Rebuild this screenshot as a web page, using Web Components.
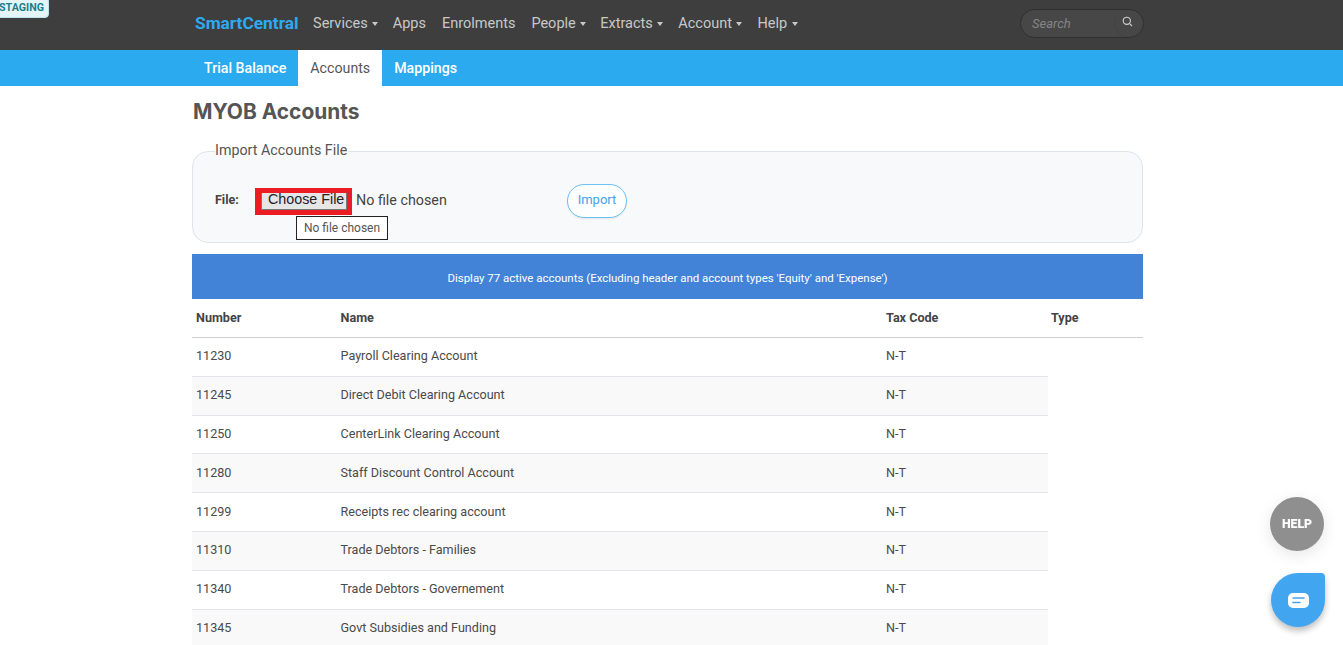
<!DOCTYPE html>
<html lang="en"><head><meta charset="utf-8"><title>MYOB Accounts</title>
<style>
html,body{margin:0;padding:0;height:645px;overflow:hidden;background:#fff;font-family:Roboto,"Liberation Sans",sans-serif;color:#4a4a4a}
</style></head><body>
<sc-badge>STAGING</sc-badge>
<sc-navbar></sc-navbar>
<sc-subnav></sc-subnav>
<sc-main>
  <sc-title>MYOB Accounts</sc-title>
  <sc-import></sc-import>
  <sc-accounts></sc-accounts>
</sc-main>
<sc-help></sc-help>
<sc-chat></sc-chat>
<script>
function def(name,html){customElements.define(name,class extends HTMLElement{constructor(){super();this.attachShadow({mode:'open'}).innerHTML=typeof html==='function'?html():html;}});}
const caret='<i></i>';
def('sc-badge',`<style>:host{position:absolute;left:-2px;top:-3px;z-index:5;display:block;height:21px;width:51px;box-sizing:border-box;background:#e4f5f9;border:1px solid #bfe3ea;border-radius:0 4px 4px 0;color:#17808f;font:700 10.7px/19px Roboto,sans-serif;text-align:left;overflow:hidden;white-space:nowrap}</style><slot></slot>`);
def('sc-navbar',()=>`<style>
:host{display:flex;align-items:center;height:50px;background:#3e3e3e;padding:0 199.5px 3px 195px;box-sizing:border-box;font:14.5px/20px Roboto,sans-serif;color:#c8c8c8}
b{color:#2daaf0;font:700 17.3px/20px Roboto,sans-serif;margin:-1px 14.5px 0 0}
a{margin-right:16px;display:flex;align-items:center;white-space:nowrap}
a.d{margin-right:15px}
a.m{margin-right:14px}
a i{display:block;margin-left:4.5px;margin-top:1px;border:3.5px solid transparent;border-top:4px solid #c8c8c8;border-bottom:0}
.s{margin-left:auto;width:123.5px;height:29px;box-sizing:border-box;border:1px solid #2f2f2f;border-radius:15px;background:#474747;display:flex;align-items:center;justify-content:space-between;padding:0 2px 0 11px;color:#858585;font:italic 13px Roboto,sans-serif}
.k{width:27px;height:27px;border-radius:50%;border:1px solid #444;border-width:0 0 1px 1px;box-sizing:border-box;display:flex;justify-content:center;padding-top:6px}
svg{display:block}
</style><b>SmartCentral</b><a class="m" style="margin-right:14.5px">Services${caret}</a><a>Apps</a><a>Enrolments</a><a class="m">People${caret}</a><a class="d">Extracts${caret}</a><a class="d">Account${caret}</a><a class="d">Help${caret}</a>
<div class="s"><span>Search</span><span class="k"><svg width="11" height="11" viewBox="0 0 11 11" fill="none" stroke="#d0d0d0" stroke-width="1.1"><circle cx="4.8" cy="4.8" r="3.6"/><path d="M7.4 7.4 10 10"/></svg></span></div>`);
def('sc-subnav',`<style>
:host{display:flex;height:36px;background:#2caaf0;padding-left:192px;font:500 14.2px/37px Roboto,sans-serif;color:#fff}
a{padding:0 12px;white-space:nowrap}
.on{background:#fff;color:#555;font-weight:400}
</style><a>Trial Balance</a><a class="on">Accounts</a><a>Mappings</a>`);
def('sc-main',`<style>:host{display:block;width:951px;margin-left:192px}</style><slot></slot>`);
def('sc-title',`<style>:host{display:block;height:65px;box-sizing:border-box;padding:13px 0 0 1px;font:700 20.9px/26px Inter,"Open Sans",sans-serif;color:#555}</style><slot></slot>`);
def('sc-import',`<style>
:host{display:block;position:relative;height:92px;box-sizing:border-box;background:#f8f9fb;border:1px solid #dfe4ea;border-radius:16px;margin-bottom:11px}
.l{position:absolute;left:22px;top:-10px;background:#fff;height:11px;line-height:16px;font-size:14.3px;color:#555;padding-right:1px;white-space:nowrap}
.r{display:flex;align-items:center;height:100%;padding:6px 0 0 22px;box-sizing:border-box}
.f{font:700 12.5px Roboto,sans-serif;color:#444;width:40px;margin-top:-2px}
.p{width:97px;height:27px;box-sizing:border-box;border:5px solid #ec1c24;border-left-width:6px;background:#ececec;display:flex;font:14.3px/11px "Liberation Sans",Arial,sans-serif;color:#222;margin-top:3px;overflow:hidden}
.p span{display:block;flex:1;box-sizing:border-box;border:1px solid #777;border-top:0;padding-left:6px;white-space:nowrap;height:17px;line-height:12px;background:#e6e6e6}
.n{font:14.3px Roboto,sans-serif;color:#444;margin-left:4px;width:211px}
.b{width:60px;height:34px;box-sizing:border-box;border:1px solid #6cc0f2;border-radius:17px;background:#fdfefe;color:#44a3e8;font:13px/30px Roboto,sans-serif;text-align:center;box-shadow:0 1px 2px rgba(0,0,0,.08);margin-top:2px}
.t{position:absolute;left:103px;top:64px;width:92px;height:24px;box-sizing:border-box;border:1px solid #222;background:#fff;font:12px/22px Roboto,sans-serif;color:#555;text-align:center}
</style><div class="l">Import Accounts File</div><div class="r"><div class="f">File:</div><div class="p"><span>Choose File</span></div><div class="n">No file chosen</div><div class="b">Import</div></div><div class="t">No file chosen</div>`);
const rows=[['11230','Payroll Clearing Account'],['11245','Direct Debit Clearing Account'],['11250','CenterLink Clearing Account'],['11280','Staff Discount Control Account'],['11299','Receipts rec clearing account'],['11310','Trade Debtors - Families'],['11340','Trade Debtors - Governement'],['11345','Govt Subsidies and Funding']];
def('sc-accounts',()=>`<style>
:host{display:block;font:12.6px Roboto,sans-serif;color:#4a4a4a}
.c{background:#4283d8;color:#fff;height:45px;line-height:48px;text-align:center;font-size:11.48px}
.r{display:grid;grid-template-columns:144.5px 545.5px 166px;align-items:center;width:856px;height:38.8px;box-sizing:border-box;border-bottom:1px solid #e2e6ea;padding-bottom:2px}
.r div{padding-left:4px}
.r:nth-child(even){background:#f9f9f9}
.h{display:grid;grid-template-columns:144.5px 545.5px 165px 96px;align-items:center;height:39px;box-sizing:border-box;border-bottom:1.5px solid #cfcfcf;font-weight:700;color:#444;padding-bottom:2px}
.h div{padding-left:4px}
</style><div class="c">Display 77 active accounts (Excluding header and account types 'Equity' and 'Expense')</div>
<div class="h"><div>Number</div><div>Name</div><div>Tax Code</div><div>Type</div></div>
<div>${rows.map(r=>`<div class="r"><div>${r[0]}</div><div>${r[1]}</div><div>N-T</div></div>`).join('')}</div>`);
def('sc-help',`<style>:host{position:fixed;left:1270px;top:497px;width:54px;height:54px;border-radius:50%;background:#8f8f8f;color:#fff;font:900 12.3px/54px Roboto,sans-serif;text-align:center;box-shadow:0 4px 16px rgba(0,0,0,.1)}</style>HELP`);
def('sc-chat',`<style>:host{position:fixed;left:1271px;top:573px;width:54px;height:54px;border-radius:50% 4px 50% 50%;background:#42a5f0;box-shadow:0 4px 6px rgba(0,0,0,.25);display:flex;align-items:center;justify-content:center}</style><svg width="21" height="15" viewBox="0 0 21 15"><rect width="21" height="15" rx="5" fill="#fff"/><path d="M5 5h11M5 9.5h7" stroke="#42a5f0" stroke-width="1.6" stroke-linecap="round"/></svg>`);
</script></body></html>
